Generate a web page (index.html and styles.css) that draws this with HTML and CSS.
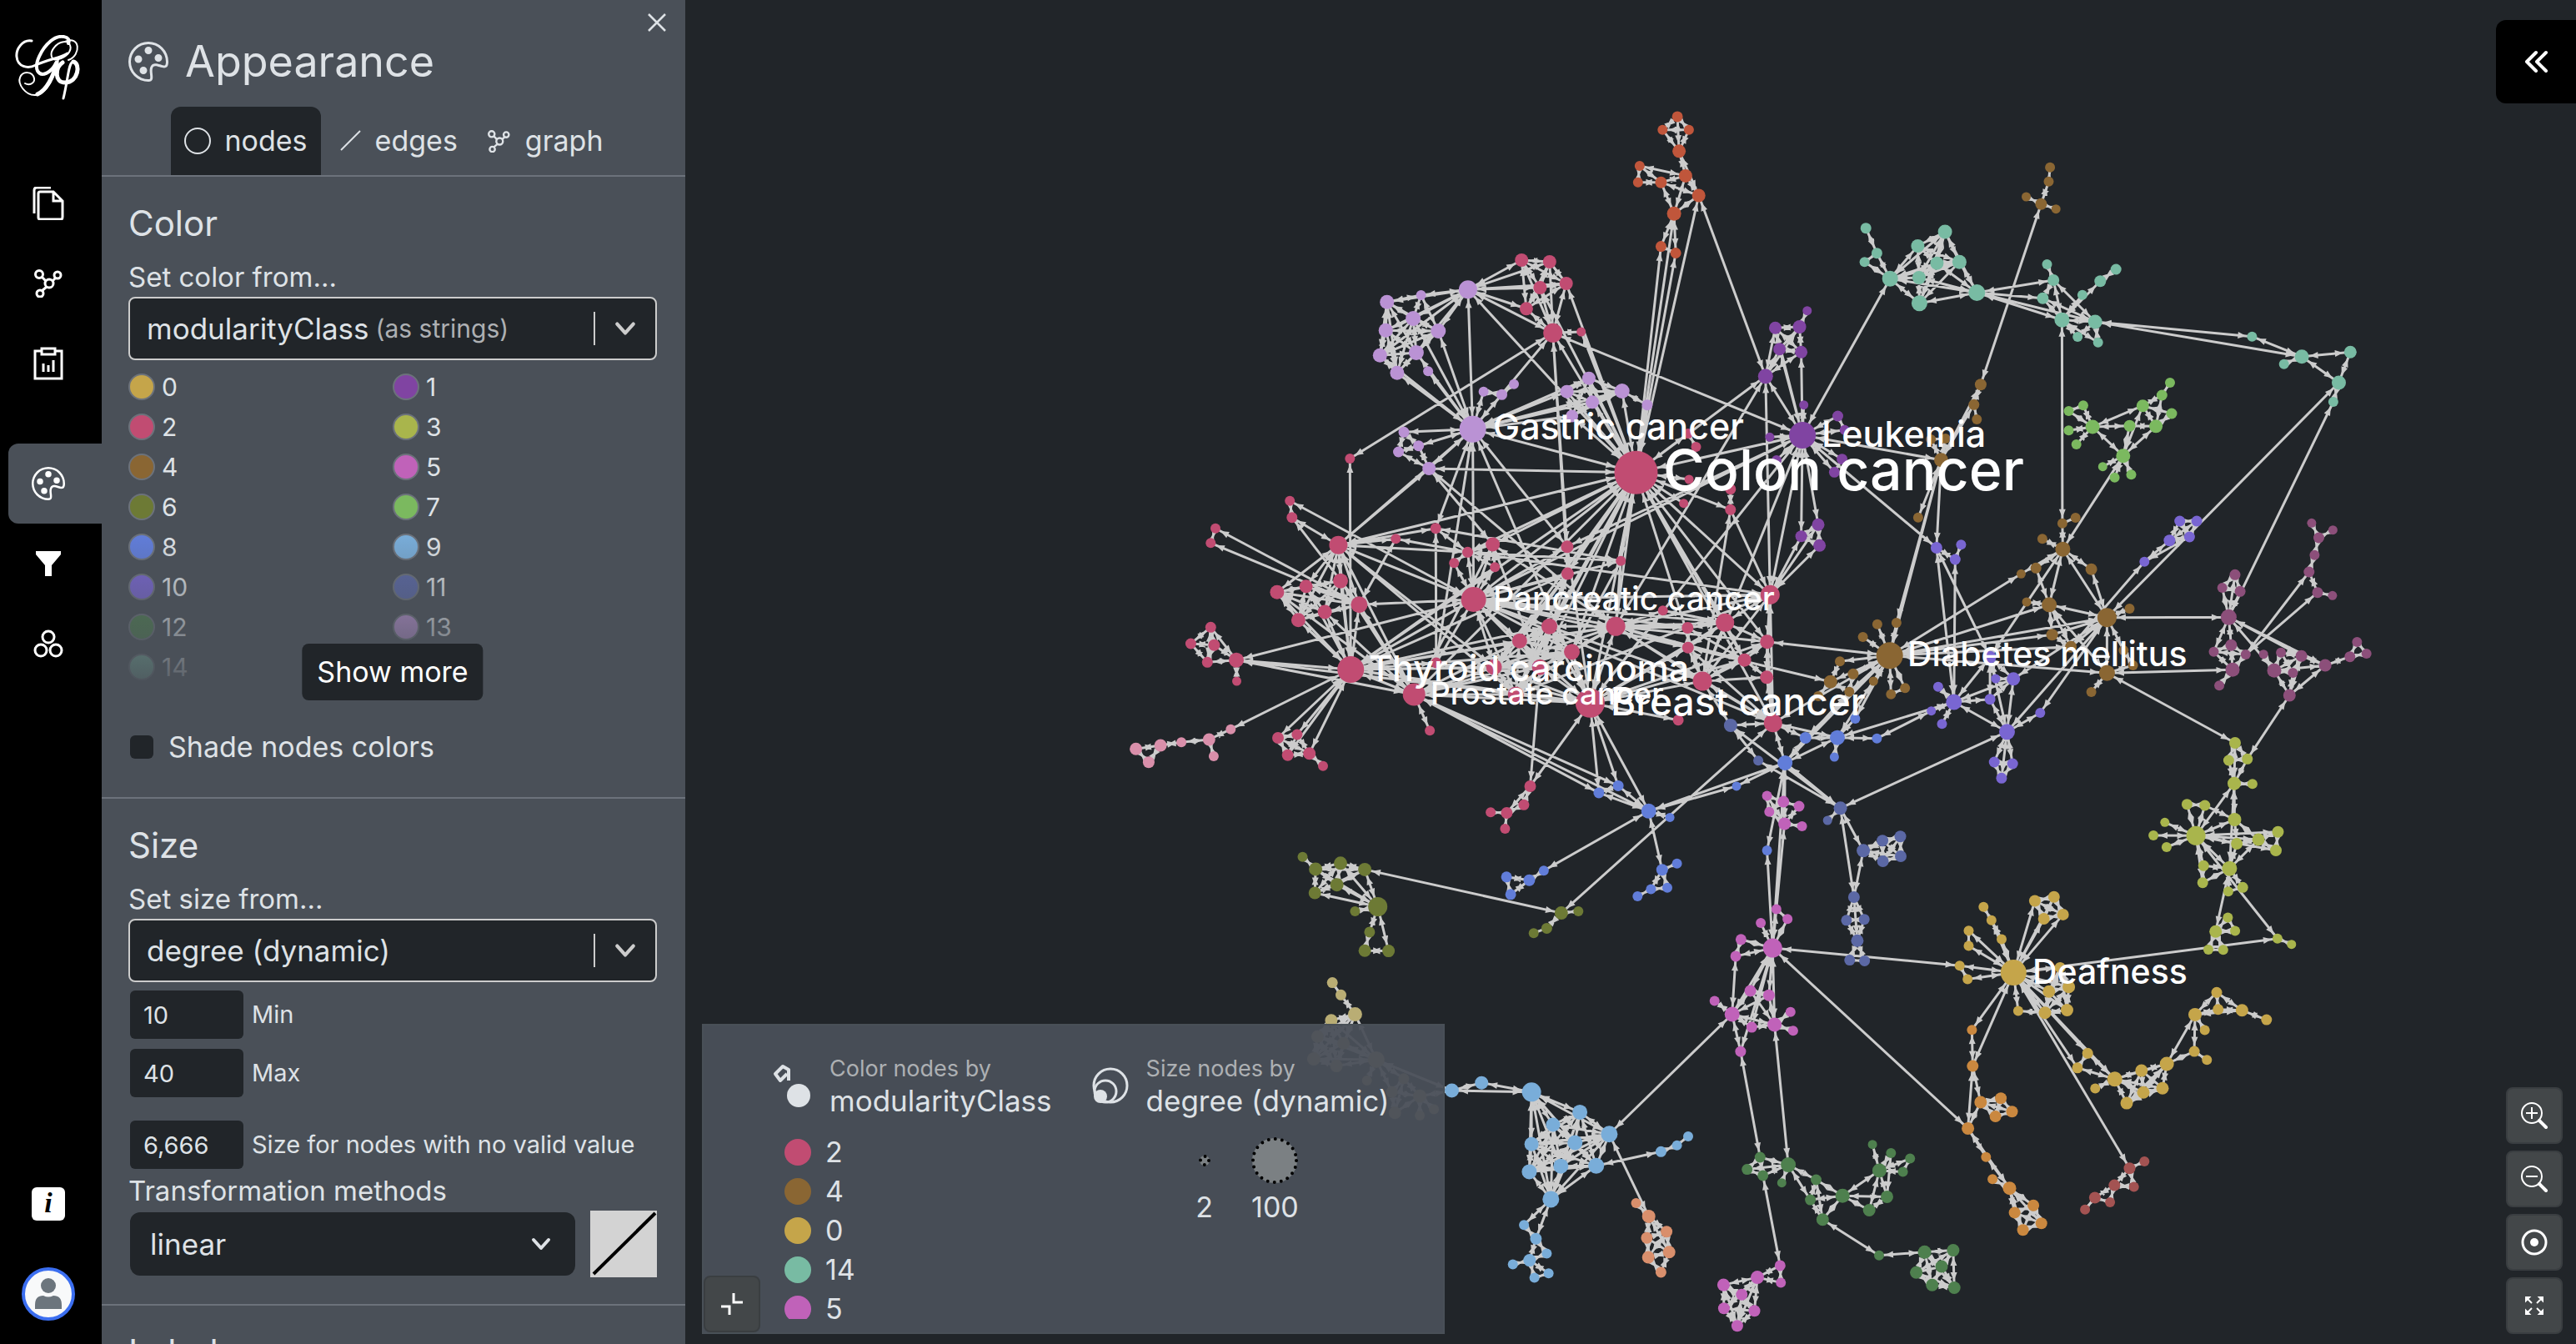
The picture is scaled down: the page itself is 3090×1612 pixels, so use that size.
FILE: index.html
```html
<!DOCTYPE html>
<html lang="en">
<head>
<meta charset="utf-8">
<title>Gephi Lite</title>
<link rel="stylesheet" href="styles.css">
</head>
<body>
<svg class="sprite" aria-hidden="true">
  <symbol id="palette" viewBox="0 0 16 16"><path fill="currentColor" d="M8 5a1.5 1.5 0 1 0 0-3 1.5 1.5 0 0 0 0 3m4 3a1.5 1.5 0 1 0 0-3 1.5 1.5 0 0 0 0 3M5.500 7a1.500 1.500 0 1 1-3 0 1.500 1.500 0 0 1 3 0m.5 6a1.500 1.500 0 1 0 0-3 1.500 1.500 0 0 0 0 3"/><path fill="currentColor" d="M16 8c0 3.150-1.866 2.585-3.567 2.070C11.420 9.763 10.465 9.473 10 10c-.603.683-.475 1.819-.351 2.920C9.826 14.495 9.996 16 8 16a8 8 0 1 1 8-8m-8 7c.611 0 .654-.171.655-.176.078-.146.124-.464.070-1.119-.014-.168-.037-.37-.061-.591-.052-.464-.112-1.005-.118-1.462-.010-.707.083-1.610.704-2.314.369-.417.845-.578 1.272-.618.404-.038.812.026 1.160.104.343.077.702.186 1.025.284l.028.008c.346.105.658.199.953.266.653.148.904.083.991.024C14.717 9.380 15 9.161 15 8a7 7 0 1 0-7 7"/></symbol>
  <symbol id="network" viewBox="0 0 34 34"><g fill="none" stroke="currentColor" stroke-width="3"><circle cx="6" cy="6" r="4.500"/><circle cx="28" cy="7" r="4"/><circle cx="18" cy="17" r="5"/><circle cx="7" cy="29" r="4"/><path d="M9 9l5 5M22 14l4-4M15 21l-6 5"/></g></symbol>
  <symbol id="chevron" viewBox="0 0 26 26"><path d="M4 8l9 10 9-10" fill="none" stroke="currentColor" stroke-width="4" stroke-linecap="round" stroke-linejoin="round"/></symbol>
</svg>

<div class="app">
  <nav class="rail" aria-label="Main">
    <a class="logo" href="#" aria-label="Home">
      <svg viewBox="0 0 80 78" width="80" height="78" fill="none" stroke="currentColor" stroke-linecap="round">
        <path stroke-width="3" d="M20 7C9 5 1 17 2 26c1 12 13 15 23 10 15-7 32-9 38-14"/>
        <path stroke-width="2" d="M52 29c-9 3-11-7-5-14 6-8 17-9 19-3 3 8-6 15-14 17M60 8c18-8 20 16 4 22"/>
        <path stroke-width="4" d="M64 10C68 2 54-2 43 7 31 17 23 35 27 43c5 9 17 1 22-9"/>
        <path stroke-width="5" d="M50 33C46 50 38 66 27 71"/>
        <path stroke-width="2" d="M52 29C48 50 38 71 25 72 12 73 3 58 6 51c3-8 15-8 17 1 1 6-6 9-11 6"/>
        <path stroke-width="5" d="M57 33c-9 6-10 24 3 24 16 0 19-23 10-25"/>
        <path stroke-width="3" d="M70 32c-6 0-6 20-12 44"/>
      </svg>
    </a>
    <ul class="rail-list">
      <li><a href="#" aria-label="File"><svg width="40" height="40" viewBox="0 0 40 40" fill="none" stroke="currentColor" stroke-width="3"><path d="M3 32V4q0-3 3-3h17M8 8q0-2 2-2h16l11 11v19q0 3-2 3H10q-2 0-2-2zM26 6v11h11"/></svg></a></li>
      <li><a href="#" aria-label="Graph"><svg width="34" height="34"><use href="#network"/></svg></a></li>
      <li><a href="#" aria-label="Data"><svg width="36" height="40" viewBox="0 0 36 40" fill="none" stroke="currentColor" stroke-width="3"><path d="M10 5H2v33h32V5h-8M10 2h16v7H10z"/><path d="M12 30V20M18 30v-8M24 30V16"/></svg></a></li>
      <li class="gap"><a class="active" href="#" aria-label="Appearance" aria-current="page"><svg width="40" height="40"><use href="#palette"/></svg></a></li>
      <li><a href="#" aria-label="Filters"><svg width="32" height="32" viewBox="0 0 32 32"><path fill="currentColor" d="M1 1h30v4L20 18v13h-8V18L1 5z"/></svg></a></li>
      <li><a href="#" aria-label="Layout"><svg width="36" height="36" viewBox="0 0 36 36" fill="none" stroke="currentColor" stroke-width="3"><circle cx="18" cy="10" r="7"/><circle cx="9" cy="26" r="7"/><circle cx="27" cy="26" r="7"/></svg></a></li>
    </ul>
    <ul class="rail-list bottom">
      <li><a href="#" aria-label="Information"><span class="info">i</span></a></li>
      <li><a href="#" aria-label="Account"><span class="avatar"><svg width="34" height="38" viewBox="0 0 34 38" fill="currentColor"><circle cx="17" cy="9" r="9"/><path d="M1 37V32q0-11 10-11q6 3 12 0q10 0 10 11v5z"/></svg></span></a></li>
    </ul>
  </nav>

  <aside class="panel">
    <header class="panel-head">
      <h1><svg width="48" height="48"><use href="#palette"/></svg>Appearance</h1>
      <button class="close" type="button" aria-label="Close"><svg width="24" height="24" viewBox="0 0 24 24"><path d="M2 2l20 20M22 2L2 22" stroke="currentColor" stroke-width="2.500"/></svg></button>
      <div class="tabs" role="tablist">
        <button type="button" role="tab" class="on" aria-selected="true"><svg width="32" height="32" viewBox="0 0 32 32"><circle cx="16" cy="16" r="15" fill="none" stroke="currentColor" stroke-width="2"/></svg>nodes</button>
        <button type="button" role="tab" aria-selected="false"><svg width="32" height="32" viewBox="0 0 32 32"><path d="M8 27L31 4" stroke="currentColor" stroke-width="2"/></svg>edges</button>
        <button type="button" role="tab" aria-selected="false"><svg width="32" height="32" viewBox="0 0 32 32"><use href="#network" x="4" y="3" width="27" height="27"/></svg>graph</button>
      </div>
    </header>

    <section>
      <h2>Color</h2>
      <label class="field" for="color-from">Set color from...</label>
      <div class="picker">
        <select id="color-from"><option>modularityClass</option></select>
        <span class="muted">(as strings)</span>
        <span class="caret"><svg width="28" height="28"><use href="#chevron"/></svg></span>
      </div>
      <div class="swatches">
        <ul>
          <li><i class="c-gold"></i>0</li><li><i class="c-violet"></i>1</li>
          <li><i class="c-rose"></i>2</li><li><i class="c-lime"></i>3</li>
          <li><i class="c-brown"></i>4</li><li><i class="c-magenta"></i>5</li>
          <li><i class="c-olive"></i>6</li><li><i class="c-green"></i>7</li>
          <li><i class="c-blue"></i>8</li><li><i class="c-sky"></i>9</li>
          <li><i class="c-indigo"></i>10</li><li><i class="c-slate"></i>11</li>
          <li><i class="c-forest"></i>12</li><li><i class="c-lilac"></i>13</li>
          <li><i class="c-teal"></i>14</li>
        </ul>
        <button type="button" class="more">Show more</button>
      </div>
      <label class="check"><input type="checkbox">Shade nodes colors</label>
    </section>

    <section>
      <h2>Size</h2>
      <label class="field" for="size-from">Set size from...</label>
      <div class="picker">
        <select id="size-from"><option>degree (dynamic)</option></select>
        <span class="caret"><svg width="28" height="28"><use href="#chevron"/></svg></span>
      </div>
      <div class="numbers">
        <div><input id="min" type="text" inputmode="decimal" value="10"><label for="min">Min</label></div>
        <div><input id="max" type="text" inputmode="decimal" value="40"><label for="max">Max</label></div>
        <div class="apart"><input id="none" type="text" inputmode="decimal" value="6,666"><label for="none">Size for nodes with no valid value</label></div>
      </div>
      <label class="field" for="method">Transformation methods</label>
      <div class="method">
        <div class="method-box"><select id="method"><option>linear</option></select><svg width="26" height="26" aria-hidden="true"><use href="#chevron"/></svg></div>
        <svg class="curve" width="80" height="80" viewBox="0 0 80 80" role="img" aria-label="Linear curve"><path d="M4 76L78 3" stroke="#000" stroke-width="4"/></svg>
      </div>
    </section>

    <section>
      <h2>Labels</h2>
    </section>
  </aside>

  <main class="stage">
    <svg class="graph" id="graph" viewBox="822 0 2268 1612" preserveAspectRatio="xMidYMid slice" role="img" aria-label="Disease network"></svg>

    <button type="button" class="unfold" aria-label="Open side panel"><svg width="28" height="28" viewBox="0 0 28 28" fill="none" stroke="currentColor" stroke-width="4" stroke-linecap="round" stroke-linejoin="round"><path d="M14 3L3 14l11 11M26 3L15 14l11 11"/></svg></button>

    <div class="legend">
      <button type="button" class="ctl fold" aria-label="Fold legend"><svg width="28" height="28" viewBox="0 0 28 28" fill="none" stroke="currentColor" stroke-width="3"><path d="M16 1v11h11M1 17h10v10"/></svg></button>
      <div class="caption">
        <svg class="mark" width="48" height="54" viewBox="0 0 48 54"><path d="M20 20V7L13 3 4 12l6 8 8-8" fill="none" stroke="currentColor" stroke-width="4" stroke-linejoin="round"/><circle cx="32" cy="38" r="14" fill="currentColor"/></svg>
        <div class="by"><small>Color nodes by</small><span>modularityClass</span></div>
        <ul class="classes">
          <li><i class="c-rose"></i>2</li>
          <li><i class="c-brown"></i>4</li>
          <li><i class="c-gold"></i>0</li>
          <li><i class="c-teal"></i>14</li>
          <li><i class="c-magenta"></i>5</li>
        </ul>
      </div>
      <div class="caption">
        <svg class="mark" width="48" height="54" viewBox="0 0 48 54"><g fill="none" stroke="currentColor" stroke-width="3"><circle cx="26" cy="26" r="20"/><circle cx="20" cy="33" r="13"/></g><circle cx="14" cy="39" r="8" fill="currentColor"/></svg>
        <div class="by"><small>Size nodes by</small><span>degree (dynamic)</span></div>
        <div class="sizes">
          <figure><svg width="14" height="56" viewBox="0 0 14 56"><circle cx="7" cy="28" r="6" fill="#7b8083"/><circle cx="7" cy="28" r="5" fill="none" stroke="#000" stroke-width="4" stroke-linecap="round" stroke-dasharray="0 7.854"/></svg><figcaption>2</figcaption></figure>
          <figure><svg width="56" height="56" viewBox="0 0 56 56"><circle cx="28" cy="28" r="27" fill="#7b8083"/><circle cx="28" cy="28" r="26" fill="none" stroke="#000" stroke-width="4" stroke-linecap="round" stroke-dasharray="0 8.168"/></svg><figcaption>100</figcaption></figure>
        </div>
      </div>
    </div>

    <div class="controls">
      <button type="button" class="ctl" aria-label="Zoom in"><svg width="34" height="34" viewBox="0 0 34 34" fill="none" stroke="currentColor" stroke-width="2"><circle cx="14" cy="14" r="12"/><path d="M14 7v14M7 14h14"/><path d="M23 23l8 8" stroke-width="4" stroke-linecap="round"/></svg></button>
      <button type="button" class="ctl" aria-label="Zoom out"><svg width="34" height="34" viewBox="0 0 34 34" fill="none" stroke="currentColor" stroke-width="2"><circle cx="14" cy="14" r="12"/><path d="M7 14h14"/><path d="M23 23l8 8" stroke-width="4" stroke-linecap="round"/></svg></button>
      <button type="button" class="ctl" aria-label="Reset zoom"><svg width="34" height="34" viewBox="0 0 34 34"><circle cx="17" cy="17" r="14" fill="none" stroke="currentColor" stroke-width="3"/><circle cx="17" cy="17" r="5" fill="currentColor"/></svg></button>
      <button type="button" class="ctl" aria-label="Full screen"><svg width="24" height="24" viewBox="0 0 24 24" fill="currentColor" stroke="currentColor" stroke-width="2"><path d="M2 2h4L2 6zM3 3l6 6M22 2v4l-4-4zM21 3l-6 6M2 22v-4l4 4zM3 21l6-6M22 22h-4l4-4zM21 21l-6-6"/></svg></button>
    </div>
  </main>
</div>
<script src="graph.js"></script>
</body>
</html>
```
FILE: styles.css
```css
* { box-sizing: border-box; }

:root {
  --dark: #212529;
  --panel: #4a5058;
  --line: #6c727b;
  --text: #dee2e6;
  --muted: #adb0b3;
}

body {
  margin: 0;
  background: var(--dark);
  color: var(--text);
  font-family: Inter, "Open Sans", sans-serif;
  font-size: 34px;
  line-height: 48px;
}

h1, h2, ul, figure { margin: 0; padding: 0; font-weight: 400; }
ul { list-style: none; }
svg { display: block; flex: none; }
a { color: inherit; text-decoration: none; }
button, input, select { font: inherit; color: inherit; margin: 0; }
button { border: 0; background: none; padding: 0; cursor: pointer; }
.sprite { position: absolute; width: 0; height: 0; }

.app {
  display: grid;
  grid-template-columns: 122px 700px 1fr;
  height: 100vh;
  overflow: hidden;
}

/* icon rail */
.rail {
  display: flex;
  flex-direction: column;
  background: #000;
  color: #fff;
}
.logo { padding: 42px 0 76px 18px; }
.rail-list a {
  display: flex;
  align-items: center;
  justify-content: center;
  height: 96px;
  padding-right: 6px;
}
.rail-list .gap { margin-top: 48px; }
.rail-list a.active {
  margin-left: 10px;
  padding-right: 16px;
  border-radius: 12px 0 0 12px;
  background: var(--panel);
}
.bottom { margin-top: auto; padding-bottom: 12px; }
.bottom li + li { margin-top: 12px; }
.info {
  width: 40px;
  height: 40px;
  border-radius: 6px;
  background: #fff;
  color: #000;
  font: italic 700 34px/38px "Liberation Serif", serif;
  text-align: center;
}
.avatar {
  display: flex;
  align-items: center;
  justify-content: center;
  width: 64px;
  height: 64px;
  border: 4px solid #3b6ef0;
  border-radius: 50%;
  background: #f8f9fa;
  color: #6c757d;
}

/* settings panel */
.panel { background: var(--panel); overflow: hidden; }
.panel-head {
  position: relative;
  padding-top: 36px;
  border-bottom: 2px solid var(--line);
}
h1 {
  display: flex;
  align-items: center;
  gap: 20px;
  padding-left: 32px;
  font-size: 52px;
  line-height: 76px;
}
.close { position: absolute; top: 15px; right: 22px; }
.tabs { display: flex; justify-content: center; margin-top: 16px; }
.tabs button {
  display: flex;
  align-items: center;
  gap: 17px;
  height: 82px;
  padding: 0 16px;
  border-radius: 12px 12px 0 0;
}
.tabs .on { background: var(--dark); }

section { padding: 32px 34px 32px 32px; border-bottom: 2px solid var(--line); }
h2 { margin-bottom: 16px; font-size: 42px; line-height: 48px; }
.field { display: block; font-size: 33px; }

.picker {
  display: flex;
  align-items: center;
  height: 76px;
  padding: 0 0 0 20px;
  border: 2px solid #ccc;
  border-radius: 8px;
  background: var(--dark);
}
select {
  appearance: none;
  height: 72px;
  padding: 0;
  border: 0;
  background: transparent;
  font-size: 35px;
  field-sizing: content;
}
.muted { margin-left: 8px; color: var(--muted); font-size: 30px; }
.caret {
  display: flex;
  align-items: center;
  height: 40px;
  margin-left: auto;
  padding: 0 22px;
  border-left: 2px solid #ccc;
  color: #ccc;
}

.swatches { position: relative; height: 402px; margin: 8px 0 30px; overflow: hidden; }
.swatches::after {
  content: "";
  position: absolute;
  inset: 50% 0 0;
  background: linear-gradient(transparent, var(--panel));
}
.swatches ul { display: grid; grid-template-columns: 1fr 1fr; }
.swatches li { display: flex; align-items: center; gap: 8px; height: 48px; font-size: 30px; }
.swatches i { width: 32px; height: 32px; border: 2px solid var(--line); border-radius: 50%; }
.more {
  position: absolute;
  z-index: 1;
  left: 50%;
  bottom: 2px;
  height: 68px;
  padding: 0 18px;
  border-radius: 8px;
  background: var(--dark);
  color: #fff;
  white-space: nowrap;
  transform: translateX(-50%);
}
.check { display: flex; align-items: center; gap: 18px; margin-bottom: 4px; padding-left: 2px; }
.check input { appearance: none; width: 28px; height: 28px; border-radius: 6px; background: var(--dark); }

.numbers { display: flex; flex-direction: column; gap: 12px; margin: 10px 0 2px; font-size: 29px; }
.numbers div { display: flex; align-items: center; gap: 10px; padding-left: 2px; }
.numbers .apart { margin-top: 16px; }
.numbers input {
  width: 136px;
  height: 58px;
  padding: 0 16px;
  border: 0;
  border-radius: 6px;
  background: var(--dark);
}
.method { display: flex; align-items: center; gap: 18px; padding-left: 2px; }
.method-box {
  display: flex;
  flex: 1;
  align-items: center;
  height: 76px;
  padding: 0 28px 0 24px;
  border-radius: 12px;
  background: var(--dark);
}
.method-box select { flex: 1; }
.curve { background: #d3d3d3; }

/* graph stage */
.stage { position: relative; min-width: 0; overflow: hidden; }
.graph { width: 100%; height: 100%; }
.edge { fill: none; stroke: #ccc; stroke-width: 3; }
.tip { fill: #ccc; }
.name { fill: #fff; font-family: Inter, sans-serif; font-weight: 500; }

.unfold {
  position: absolute;
  top: 24px;
  right: 0;
  display: flex;
  align-items: center;
  justify-content: center;
  width: 96px;
  height: 100px;
  border-radius: 12px 0 0 12px;
  background: #000;
  color: #fff;
}

.ctl {
  display: flex;
  align-items: center;
  justify-content: center;
  width: 68px;
  height: 68px;
  border: 2px solid #3a3e41;
  border-radius: 8px;
  background: #434749;
  color: #fff;
}
.controls { position: absolute; right: 16px; bottom: 12px; display: grid; gap: 8px; }

.legend {
  position: absolute;
  left: 20px;
  bottom: 12px;
  display: flex;
  gap: 44px;
  height: 372px;
  padding: 34px 64px 16px 82px;
  border: 2px solid #495057;
  background: rgba(74, 79, 89, .95);
  overflow: hidden;
}
.fold { position: absolute; left: 0; bottom: 0; }
.caption {
  display: grid;
  grid-template-columns: auto auto;
  grid-template-rows: auto 1fr;
  column-gap: 21px;
  overflow: hidden;
}
.mark { margin-top: 12px; }
.by { display: grid; align-content: start; font-size: 35px; line-height: 40px; }
.by small { color: var(--muted); font-size: 27px; line-height: 36px; }
.classes { grid-column: 1 / -1; margin-top: 18px; }
.classes li {
  display: flex;
  align-items: center;
  gap: 17px;
  height: 47px;
  padding-left: 15px;
}
.classes i { width: 32px; height: 32px; border-radius: 50%; }
.sizes {
  display: flex;
  grid-column: 1 / -1;
  gap: 46px;
  justify-content: center;
  margin-top: 24px;
  padding-left: 20px;
}
.sizes figure { display: grid; justify-items: center; align-content: start; row-gap: 4px; }

/* community colours */
.c-gold { background: #c5a54a; fill: #c5a54a; }
.c-violet { background: #8044a2; fill: #8044a2; }
.c-rose { background: #c14c72; fill: #c14c72; }
.c-lime { background: #a9b54c; fill: #a9b54c; }
.c-brown { background: #8a6633; fill: #8a6633; }
.c-magenta { background: #c062b9; fill: #c062b9; }
.c-olive { background: #6d7a35; fill: #6d7a35; }
.c-green { background: #7bb95f; fill: #7bb95f; }
.c-blue { background: #617dd9; fill: #617dd9; }
.c-sky { background: #79add9; fill: #79add9; }
.c-indigo { background: #7966d2; fill: #7966d2; }
.c-slate { background: #5b68a5; fill: #5b68a5; }
.c-forest { background: #4e804e; fill: #4e804e; }
.c-lilac { background: #ba92d4; fill: #ba92d4; }
.c-teal { background: #78bba3; fill: #78bba3; }
.c-ember { fill: #c0563b; }
.c-pink { fill: #d98faa; }
.c-plum { fill: #8c4f7a; }
.c-sand { fill: #b9ad74; }
.c-salmon { fill: #d98f6c; }
.c-tangerine { fill: #ca883f; }
.c-brick { fill: #a35352; }
```
FILE: graph.js
```js
// Each sector of the map keeps its nodes on a local grid: [x0, y0, column width, row height].
const sectors = {
  north: [0, 0, 1.9707, 1.9707],
  gastric: [1560, 260, 0.38265, 0.33333],
  core: [1360, 580, 0.5102, 0.33333],
  east: [2080, 120, 0.5102, 0.33333],
  middle: [2080, 600, 0.5102, 0.33333],
  south: [1500, 900, 0.44643, 0.44643],
  corner: [2100, 1040, 0.43367, 0.3648]
};

// prefix, colour, sector, "x,y,radius ..."
const groups = [
  ["o", "ember", "north", "1021,71,6.5 1012,79,6 1028,79,6 1022,92,8 998,101,6 1026,107,8 997,111,6 1011,111,7 1034,119,8 1019,130,8.5 1011,150,6.5 1020,154,6.5"],
  ["l", "lilac", "gastric", "525,262,11 271,307,8.5 378,282,6 353,366,9 267,409,8.5 432,411,9 249,499,8.5 363,489,9 303,562,8.5 400,556,6 540,764,16 574,629,6 631,640,6.5 669,602,6 324,775,6.5 370,824,6.5 307,846,6.5 403,906,8 835,629,8 904,581,8 1008,627,9 915,667,8 851,717,7.5 1087,677,6.5"],
  ["r", "rose", "gastric", "693,156,8 781,162,8 833,240,8 751,255,8 708,331,8 791,418,11.5 880,414,5.5 155,870,6 1052,920,26 1215,780,6 1240,828,6 1218,945,5.5 1348,980,6.5 1348,1054,6.5 1201,1031,5.5"],
  ["b", "rose", "core", "367,62,6 372,122,6.5 192,161,6 181,214,6 481,221,11 616,199,6 710,161,6.5 785,247,6.5 753,286,6 844,219,8.5 849,301,6 1019,227,7.5 1020,324,7.5 1145,278,6 337,391,8.5 405,370,8 486,350,9 530,436,10 449,462,8.5 387,491,8.5 799,417,15 181,517,6.5 134,576,6.5 189,581,7 173,643,6.5 241,635,9 242,711,5.5 510,669,16 659,759,13.5 1073,790,17.5 977,514,9.5 907,566,9 1133,514,11.5 1030,605,9.5 847,660,9.5 711,645,6.5 955,661,9.5 898,759,9.5 1244,457,6 1302,519,7 1303,590,7 1390,500,11 1496,400,11.5 1489,569,8.5 1436,635,8 1337,711,11.5 1488,697,8 1280,851,6.5 1503,862,11 339,915,7 384,903,6.5 362,977,7 413,971,7.5 445,1016,6 696,889,6 932,1089,7 917,1156,6.5 877,1185,7 839,1183,6 873,1242,6"],
  ["p", "pink", "core", "228,884,6 177,921,7.5 188,981,6 112,931,6 63,942,7.5 5,955,7.5 35,1003,7"],
  ["v", "violet", "east", "172,758,5.5 97,820,7.5 154,816,8 107,896,7.5 74,994,9 158,907,7.5 164,1097,5.5 161,1206,16 244,1137,6.5 260,1187,6 84,1213,5.5 254,1292,6.5 100,1296,6 236,1339,6.5"],
  ["w", "violet", "middle", "198,88,7.5 158,130,7 201,163,7.5"],
  ["t", "teal", "east", "310,461,6.5 336,551,6.5 307,583,6 432,525,8 496,474,8.5 367,643,9.5 477,587,8 530,583,8.5 435,639,8 436,731,9.5 571,693,10 736,591,6 751,648,7 726,713,7 771,791,9 849,798,8.5 819,701,6 861,652,7 898,609,6.5 808,852,6 856,872,6 1218,851,6 1335,923,8.5 1293,950,6 1449,907,7.5 1422,1017,8.5 1409,1086,6"],
  ["n", "brown", "east", "743,242,6 740,293,6 687,348,5.5 722,374,7 757,392,5.5 580,1024,7 564,1096,6.5 571,1149,6 463,1221,6 497,1218,6 487,1295,8.5"],
  ["m", "brown", "middle", "433,62,6 803,63,6 772,83,6 725,139,6 773,176,9 710,244,6.5 675,265,5.5 840,248,7 688,366,5.5 741,376,9 877,422,11.5 930,390,6 748,484,7 792,527,7 916,540,6 938,594,6 877,622,9.5 840,690,6 366,559,16 337,446,6 382,441,6 303,492,6 249,580,6 280,625,6.5 227,653,8 271,689,6 198,705,6 328,651,5.5 402,676,6 369,698,6"],
  ["g", "green", "east", "1025,1017,6 1006,1062,6.5 961,1100,7.5 1029,1128,6.5 821,1099,6 787,1119,6 843,1176,8.5 930,1172,7 992,1174,8 915,1280,8.5 787,1189,6 805,1239,6 867,1319,5.5 895,1358,6 934,1348,6"],
  ["i", "indigo", "middle", "476,171,7 520,213,6.5 534,160,6 965,221,6 602,565,7.5 1048,75,6.5 1088,75,6.5 1024,145,7 1071,132,6.5 480,671,6 517,726,9.5 615,642,5.5 657,643,8 602,716,6.5 464,758,5.5 489,805,6 642,833,9.5 720,765,6 612,942,6.5 655,948,6.5 629,1000,6.5"],
  ["u", "blue", "middle", "285,786,6 168,855,7 243,854,9 336,857,6 236,924,5.5 120,945,9"],
  ["k", "blue", "south", "936,114,6.5 988,95,6.5 1070,163,9 1127,180,5.5 1306,96,5.5 1388,269,6 688,340,6.5 749,349,7 788,323,6 699,387,6.5 1106,321,7 1146,304,6 1120,369,6 1076,373,6 1040,392,6"],
  ["s", "slate", "middle", "-8,810,8 57,937,6 250,1108,8 220,1152,5.5 304,1261,8 349,1225,7 391,1210,7 392,1281,7 350,1299,7 282,1428,7"],
  ["z", "slate", "corner", "265,175,6.5 314,172,6.5 295,242,7.5 274,306,6.5 315,308,6.5"],
  ["q", "plum", "middle", "1358,82,5.5 1408,107,5.5 1375,135,6.5 1365,197,6 1352,258,6.5 1372,332,6.5 1407,343,5.5 1178,268,6.5 1148,315,6 1190,328,6.5 1163,421,9.5 1169,521,7 1128,545,6 1203,555,6 1172,610,8.5 1141,667,6 1245,554,5.5 1286,548,6 1334,560,7 1270,613,8.5 1314,621,6 1390,594,7.5 1306,702,7.5 1448,563,6.5 1487,552,6 1465,510,6"],
  ["y", "lime", "middle", "1178,873,7 1163,936,6.5 1207,931,6.5 1176,1019,8 1219,1021,6 1065,1094,6.5 1107,1098,6.5 1013,1159,5.5 1177,1149,8 986,1206,6 1086,1207,11.5 1017,1248,6 1182,1236,7 1233,1221,7.5 1279,1193,7 1274,1260,7 1104,1315,6.5 1165,1325,9 1102,1376,6.5 1196,1393,6.5 1162,1408,6"],
  ["x", "lime", "corner", "1320,166,6 1286,212,7.5 1340,210,6 1266,271,6 1307,272,6 1457,235,6 1496,254,5.5"],
  ["a", "magenta", "south", "1388,122,6 1432,138,7 1474,150,6.5 1394,165,6 1435,197,7.5 1482,204,6 1413,427,6 1443,453,6 1371,464,6 1318,508,6.5 1304,553,6.5 1403,531,11.5 1343,646,7 1393,658,7 1247,673,6 1294,709,9 1451,703,6 1408,737,8.5 1458,753,6 1347,744,6.5 1317,809,6.5 1423,1384,6.5 1425,1430,6 1362,1416,8 1271,1436,7.5 1320,1462,7 1272,1499,7 1354,1506,7 1308,1546,7"],
  ["e", "olive", "south", "140,286,6 175,319,8 242,303,8 307,320,8 232,361,8 173,383,7.5 281,432,6 342,420,11.5 320,488,6.5 307,538,7.5 371,539,7.5 835,437,8 881,432,6 796,478,6.5 761,491,6"],
  ["d", "sand", "south", "220,624,6.5 243,657,6.5 281,709,8.5 217,725,7.5 180,769,7.5 250,787,7.5 170,829,8 231,848,7.5 338,831,10 313,887,6 412,882,6.5 380,918,7 455,929,8 388,974,7.5 455,981,6 493,964,6"],
  ["h", "sky", "south", "541,914,8.5 621,893,8 755,918,11.5 885,972,9 813,1006,8.5 755,1058,8.5 872,1054,9 964,1031,10 749,1132,9 834,1117,9 929,1116,9.5 807,1206,10 1103,1078,6.5 1146,1061,6 1176,1037,6 735,1275,6 767,1312,7 796,1352,6 750,1370,7.5 705,1381,6 763,1417,6 801,1405,6"],
  ["j", "salmon", "south", "1036,1216,6 1070,1252,8 1118,1293,7 1065,1310,7 1069,1362,7.5 1125,1348,7.5 1103,1402,6.5"],
  ["f", "forest", "corner", "26,954,6.5 -10,994,6.5 34,1014,6.5 104,979,9 86,1038,5.5 181,1028,6.5 165,1094,6.5 199,1159,7.5 254,1081,8.5 337,912,5.5 388,940,6 441,958,6 421,1002,6 356,998,8.5 377,1084,7.5 328,1128,7.5 355,1277,6 481,1266,8 560,1260,7.5 458,1333,7.5 528,1313,7.5 502,1374,7.5 563,1383,7.5"],
  ["G", "gold", "corner", "644,131,6 666,175,6 694,237,6 603,209,6 603,259,6 578,324,6 600,369,6 786,111,7 839,98,7 864,156,7 811,170,7 727,347,15.5 856,330,6.5 880,394,7.5 825,409,7.5 740,473,6 814,479,7.5 875,470,7.5 932,612,6.5 904,660,6.5 1007,697,9 953,728,6 1040,776,7.5 1081,669,7.5 1086,741,7.5 1139,727,7.5 1151,647,8.5 1229,485,8 1227,606,6.5 1262,634,6 1256,536,6 1289,412,6.5 1293,468,6.5 1359,471,7.5 1427,502,6.5"],
  ["T", "tangerine", "corner", "612,535,6 614,654,7 636,773,7.5 692,760,7 723,804,7 677,820,7 601,859,7.5 651,953,6 669,1026,6 716,1056,8 782,1112,7 730,1136,7 804,1171,7 753,1193,7"],
  ["R", "brick", "corner", "1048,990,7 1089,968,6 1006,1046,7 1060,1051,6 952,1087,7 994,1102,6 925,1126,6"]
];

// "hub: a b c" links the hub to each node; "* a b c" links every pair. "a2-5" is a run of nodes.
const links = `
* o0-3
* o4 o6 o7
o5: o3 o4 o7 o8 o9
o9: o7 o8 o10 o11
o8: o3 o7 v4
o10: o11
* l1 l3-8
l2: l0 l1 l3 l5
l0: l1 l3-7 l10 r0-5 r8
l10: l3 l5-9 l11 l12 l14 l15 l17-22 r8 b20 b29 b11 b6 b4 b35
* l14-16
l17: l15 l16 r8 b9 b32
l11: l12
l12: l13
* l18-22
l20: l23
* r0-5
r5: r6 r7 v7 b11 b12 l10
r8: r2 r3 r5 r6 l18-23 o8-11 r9 r11 r13 r14 v4 v7
r9: r10
r12: r13
r8: b4 b9 b12 b13 b20 b27-34 b36 b37 b41-45 b48 b7
r13: b45
r7: b27
b0: b1 b20
b1: b4 b17
b2: b3 b17
b3: b17
b4: b5 b6 b7 b14-20 b27 b28 b37 b34 l17
* b14-19
b27: b14-19
b28: b14 b16 b17 b18
b20: b7-13 b17 b25 b27 b29-37 b39-42 b45 b48
b5: b7 b17
b6: b7 b13 b35
b7: b8 b9 b42 b10 b13
b9: b10 b36 b32 b28
b11: b12 b29 b27
b12: b36 b31 b34 b37
b13: b32 b33
b27: b25 b28-37 b49-52 b12 p0 b10
b28: b25 b29-31 b33 b34 b36 b37 b54 k0 k1 k2
b29: b30-37 b38 b40 b41 b43-45 b47 k0 k1 k2 b55 b25
* b30 b31 b33 b34 b36 b37
b32: b30 b31 b33 b34 b36 b38-41 b43-45 b48 b42
b41: b38-40 b42-45
b42: b43 b46 b48 b45 w0-2 r13 v4 v7 b32 b37
b43: b44-46 b48 m18
b44: b45 b46 b39
b45: b46 b48 s0
b40: b48 b45 m24
b39: b40
b46: b48
b55: b36 b56 b57
b57: b56 b58 b59
* b21-24
b25: b21 b23 b24 b26
* b49-52
b52: b53
p1: p0 p2 p3
* p4-6
p3: p4
* v1-3 v5
v0: v2
v4: v1-3 v5 v7 b32
v7: v1 v3 v5 v6 v8-13 t5 n10 w0 w1 i0 b11 b20 b29 b45
v8: v9
v11: v13
* w0-2
t1: t0 t2 t5
t2: t5
* t3-9
t10: t5-9 t12-15 t4
* t12-15
t11: t12
t14: t16 t17 t19 t20 m2
t18: t17
t15: t19-22
t22: t21 t23-25
t25: t24 t26 m10
t26: q10
n3: n1 n2 n4 n5
n0: n1
n6: n5 n7 n10
n10: n5 n8 n9 m0 m18 m20 i0
n8: n9
m4: m2 m3 m5 m7 m9 m10 m6 g9 i4
m1: m2
m9: m8 m10 m12 m13 m16 m18 m5
m10: m7 m11 m14 m16 m18 q10 i12 i16 i17 m13
m12: m13 m10
m14: m15
m16: m15 m17 m18 q14 y0
m18: m6 m12 m13 m19-25 m27-29 u0-2 u5 b48
m28: m29
m24: m22 m25 m26
m23: m25
m27: u2
m25: u5
g1: g0 g2 g8
g3: g2 g8
g6: g2 g4 g5 g7 g9-11
g4: g5
g8: g2 g7 g9
g9: g2 g7 g12-14
i1: i0 i2 i10
i0: i4 i10
* i5-8
i3: i7 i8 m13
i4: i10-13 i16
i10: i9 i12-16 u2
i12: i11 i13 i16
i16: i13 i17-20 s2
* i18-20
i14: u3
u2: u0 u1 u3-5
b48: u1 u2 u5 s0 e11
u5: u1 k2 k4 s2 k5 a4 a11
* k0-2
k2: k3 k4 k8 k10
* k6 k7 k9
k7: k8
k10: k11-13
k13: k12 k14
k5: a11
s0: s1 s2
s2: s1 s3 s4 s9
* s4-8
s4: s9
s9: z0-2
* z0-2
* z2-4
q2: q0 q1 q3
q4: q3 q5 q13
q5: q6 q13
* q7-10
q10: q11 q12 q18 q19 q21
* q11-14
q14: q15
q16: q19
* q17-20
q22: q18-21 y2
q21: q18 q19 q23
* q23-25
* y0-3
y3: y4 y8 y10 y17
y10: y5-9 y11-18
y5: y6
y6: y8
y8: y13 y12
y13: y12 y14 y15 y17
y14: y15
y17: y12 y16 y18-20 x1
y16: y18
y19: y20
* x0-2
* x1 x3 x4
y10: x5
x5: x6 G11
* a0 a1 a3 a4
a2: a1 a4
a4: a5 a11
a11: a6-10 a12 a13 a15 a17 a19 a20 G5 T6
a6: a7
a9: a10
a15: a10 a12-14 a17 a19 a20 h7
a17: a12 a13 a16 a18 a19 f3
a12: a13
a20: f0
a21: f2 a22 a23
a22: a23
* a23-28
e0: e1
* e1-5
e7: e1-6 e8 e10
e9: e8 e10
e11: e3 e12 e13
e13: e14
d1: d0 d2
* d2-8
d8: d9-11 h0
* d10-13
d12: d14 d15 h0
* h0-2
* h2-11
h10: h12
h13: h12 h14
h16: h11 h15 h17 h18
h15: h11
h18: h17 h19-21
h20: h21
h7: j1
* j1-5
j0: j1
j6: j4 j5
* f0-3
f3: f4-6
* f5-8
f8: f13-15
f13: f9-12 f14 f15
f11: f12
f14: f10 f15
f16: f7 f17
* f17-22
G1: G0 G2
G11: G1-10 G12-20 T0 T1 R0
G3: G4
G5: G6
* G7-10
* G12-14 G16 G17
G15: G16
G18: G19
G20: G18 G19 G21-26
* G22-26
G26: G27 G28
G28: G27 G29
G27: G30-33
* G31-33
G33: G34
T1: T0 T2 T6
T6: T2 T7 T9
* T2-5
T9: T7 T8
* T9-13
* R0 R2 R3
R0: R1
* R2 R4 R5
R4: R6
`;

const labels = [
  ["Gastric cancer", 1791, 527, 43], ["Leukemia", 2185, 536, 43], ["Colon cancer", 1995, 588, 68],
  ["Pancreatic cancer", 1791, 732, 39], ["Thyroid carcinoma", 1642, 817, 43], ["Prostate cancer", 1716, 845, 37],
  ["Breast cancer", 1932, 858, 46], ["Diabetes mellitus", 2288, 799, 41], ["Deafness", 2438, 1180, 41]
];

const nodes = {};
for (const [prefix, colour, sector, list] of groups) {
  const [x0, y0, sx, sy] = sectors[sector];
  list.split(" ").forEach((item, index) => {
    const [x, y, r] = item.split(",").map(Number);
    nodes[prefix + index] = { x: x0 + x * sx, y: y0 + y * sy, r, colour };
  });
}

const expand = text => text.trim().split(/\s+/).flatMap(part => {
  const [, prefix, from, to] = part.match(/^([a-zA-Z])(\d+)(?:-(\d+))?$/);
  const run = [];
  for (let i = +from; i <= +(to || from); i++) run.push(prefix + i);
  return run;
});

const pairs = new Map();
const join = (a, b) => a !== b && pairs.set([a, b].sort().join(), [a, b]);
for (const line of links.trim().split("\n")) {
  if (line[0] === "*") {
    const all = expand(line.slice(1));
    all.forEach((a, i) => all.slice(i + 1).forEach(b => join(a, b)));
  } else {
    const [hub, rest] = line.split(":");
    expand(rest).forEach(b => join(hub, b));
  }
}

let lines = "", tips = "";
for (const [from, to] of pairs.values()) {
  const a = nodes[from], b = nodes[to];
  const length = Math.hypot(b.x - a.x, b.y - a.y) || 1;
  const ux = (b.x - a.x) / length, uy = (b.y - a.y) / length;
  lines += `M${a.x.toFixed(1)} ${a.y.toFixed(1)}L${b.x.toFixed(1)} ${b.y.toFixed(1)}`;
  for (const [n, dx, dy] of [[a, ux, uy], [b, -ux, -uy]]) {
    const tx = n.x + dx * (n.r + 1), ty = n.y + dy * (n.r + 1);
    const bx = tx + dx * 10, by = ty + dy * 10;
    tips += `M${tx.toFixed(1)} ${ty.toFixed(1)}L${(bx - dy * 4).toFixed(1)} ${(by + dx * 4).toFixed(1)}L${(bx + dy * 4).toFixed(1)} ${(by - dx * 4).toFixed(1)}Z`;
  }
}
const discs = Object.values(nodes).map(n =>
  `<circle class="c-${n.colour}" cx="${n.x.toFixed(1)}" cy="${n.y.toFixed(1)}" r="${n.r}"/>`).join("");
const names = labels.map(([text, x, y, size]) =>
  `<text class="name" x="${x}" y="${y}" font-size="${size}">${text}</text>`).join("");

document.getElementById("graph").innerHTML =
  `<path class="edge" d="${lines}"/><path class="tip" d="${tips}"/>${discs}${names}`;
```
